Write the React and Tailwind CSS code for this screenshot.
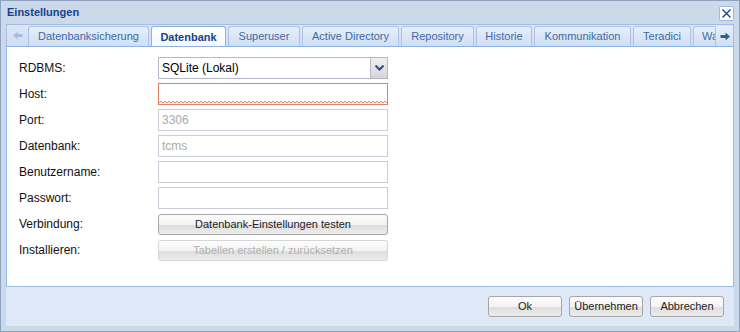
import React from "react";

const tabs = [
  { label: "Datenbanksicherung", w: "w-[121px]" },
  { label: "Datenbank", w: "w-[75px]", active: true },
  { label: "Superuser", w: "w-[72px]" },
  { label: "Active Directory", w: "w-[97px]" },
  { label: "Repository", w: "w-[73px]" },
  { label: "Historie", w: "w-[56px]" },
  { label: "Kommunikation", w: "w-[97px]" },
  { label: "Teradici", w: "w-[58px]" },
  { label: "Wa", w: "w-[40px]", clip: true },
];

function Tab({ label, w, active, clip }) {
  if (active) {
    return (
      <div
        className={`${w} shrink-0 h-[21px] -mb-px relative flex items-center justify-center rounded-t-[3px] border border-b-0 border-[#8db2e3] bg-gradient-to-b from-white to-[#f4f8fd] text-[11px] font-bold text-[#15428b]`}
      >
        {label}
      </div>
    );
  }
  return (
    <div
      className={`${w} shrink-0 h-[20px] flex items-center rounded-t-[3px] border border-b-0 border-[#a9c4e8] bg-gradient-to-b from-[#e6eefa] to-[#cfdff4] text-[11px] text-[#416aa3] whitespace-nowrap overflow-hidden ${
        clip ? "justify-start pl-[8px]" : "justify-center"
      }`}
    >
      {label}
    </div>
  );
}

function Row({ label, children }) {
  return (
    <div className="flex items-center h-[22px]">
      <div className="w-[139px] text-[12px] text-[#111]">{label}</div>
      <div className="w-[230px]">{children}</div>
    </div>
  );
}

function Field({ value, muted, invalid }) {
  return (
    <div
      className={`relative h-[22px] bg-white border flex items-center px-[3px] text-[12px] ${
        invalid ? "border-[#e2805f]" : "border-[#c9ced8]"
      } ${muted ? "text-[#aaaaaa]" : "text-black"}`}
    >
      {value}
      {invalid && (
        <svg className="absolute left-0 bottom-0" width="228" height="4">
          <defs>
            <pattern id="zz" width="4" height="4" patternUnits="userSpaceOnUse">
              <path d="M0 3 L2 1 L4 3" fill="none" stroke="#f47b7b" strokeWidth="1" />
            </pattern>
          </defs>
          <rect width="228" height="4" fill="url(#zz)" />
        </svg>
      )}
    </div>
  );
}

function GrayButton({ children, disabled, className = "" }) {
  return (
    <div
      className={`h-[21px] rounded-[3px] border flex items-center justify-center text-[11px] bg-[linear-gradient(to_bottom,#fdfdfd_0%,#f3f3f3_50%,#dedede_54%,#ececec_100%)] ${
        disabled
          ? "border-[#d6d6d6] text-[#b0b0b0]"
          : "border-[#a6a6a6] text-[#222]"
      } ${className}`}
    >
      {children}
    </div>
  );
}

export default function App() {
  return (
    <div className="w-[740px] h-[332px] flex flex-col bg-[#cbd9ea] border border-[#8ea3c0] font-['Liberation_Sans',Arial,sans-serif]">
      <div className="h-[23px] shrink-0 flex items-center justify-between pl-[6px] pr-[5px]">
        <span className="text-[11px] font-bold text-[#15428b]">Einstellungen</span>
        <div className="w-[15px] h-[15px] mt-[1px] bg-white border border-[#99bbe8] rounded-[2px] flex items-center justify-center">
          <svg width="11" height="11" viewBox="0 0 11 11">
            <path d="M1.5 1.5 L9.5 9.5 M9.5 1.5 L1.5 9.5" stroke="#15428b" strokeWidth="1.3" />
          </svg>
        </div>
      </div>

      <div className="flex-1 flex flex-col px-[5px]">
        <div className="h-[23px] shrink-0 flex items-end bg-gradient-to-b from-[#dbe6f4] to-[#d1def0] border-x border-t border-[#a4bde0] border-b border-b-[#8db2e3]">
          <div className="w-[21px] h-full shrink-0 flex items-center justify-center">
            <svg width="10" height="9" viewBox="0 0 10 9">
              <path d="M0 4.5 L4.5 0.5 L4.5 3 L9.5 3 L9.5 6 L4.5 6 L4.5 8.5 Z" fill="#a8bedc" />
            </svg>
          </div>
          <div className="flex-1 h-full flex items-end gap-[2px] overflow-hidden">
            {tabs.map((t) => (
              <Tab key={t.label} {...t} />
            ))}
          </div>
          <div className="w-[18px] h-[20px] shrink-0 flex items-center justify-center border-l border-[#a9c4e8] bg-gradient-to-b from-[#e6eefa] to-[#cfdff4]">
            <svg width="10" height="9" viewBox="0 0 10 9">
              <path d="M10 4.5 L5.5 0.5 L5.5 3 L0.5 3 L0.5 6 L5.5 6 L5.5 8.5 Z" fill="#3b5a8c" />
            </svg>
          </div>
        </div>

        <div className="h-[240px] shrink-0 bg-white border-x border-b border-[#99bbe8] pt-[10px] pl-[12px] flex flex-col gap-[4px]">
          <Row label="RDBMS:">
            <div className="h-[22px] flex bg-white border border-[#b5b8c8]">
              <div className="flex-1 flex items-center px-[3px] text-[12px] text-black">
                SQLite (Lokal)
              </div>
              <div className="w-[17px] border-l border-[#b5b8c8] bg-gradient-to-b from-[#f0f0f0] to-[#d6d6d6] flex items-center justify-center">
                <svg width="9" height="6" viewBox="0 0 9 6">
                  <path d="M0.5 0.5 L4.5 4.5 L8.5 0.5" fill="none" stroke="#2e4d85" strokeWidth="2" />
                </svg>
              </div>
            </div>
          </Row>
          <Row label="Host:">
            <Field value="" invalid />
          </Row>
          <Row label="Port:">
            <Field value="3306" muted />
          </Row>
          <Row label="Datenbank:">
            <Field value="tcms" muted />
          </Row>
          <Row label="Benutzername:">
            <Field value="" />
          </Row>
          <Row label="Passwort:">
            <Field value="" />
          </Row>
          <Row label="Verbindung:">
            <GrayButton>Datenbank-Einstellungen testen</GrayButton>
          </Row>
          <Row label="Installieren:">
            <GrayButton disabled>Tabellen erstellen / zurücksetzen</GrayButton>
          </Row>
        </div>

        <div className="h-[39px] shrink-0 bg-[#dfe8f6] flex items-center justify-end gap-[7px] pr-[10px]">
          <GrayButton className="w-[74px]">Ok</GrayButton>
          <GrayButton className="w-[74px]">Übernehmen</GrayButton>
          <GrayButton className="w-[74px]">Abbrechen</GrayButton>
        </div>
      </div>
      <div className="h-[5px] shrink-0" />
    </div>
  );
}
